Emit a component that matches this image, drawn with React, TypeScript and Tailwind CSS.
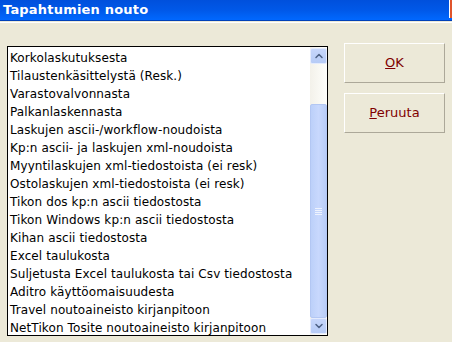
import { ChevronUp, ChevronDown } from "lucide-react";

const items = [
  "Korkolaskutuksesta",
  "Tilaustenkäsittelystä (Resk.)",
  "Varastovalvonnasta",
  "Palkanlaskennasta",
  "Laskujen ascii-/workflow-noudoista",
  "Kp:n ascii- ja laskujen xml-noudoista",
  "Myyntilaskujen xml-tiedostoista (ei resk)",
  "Ostolaskujen xml-tiedostoista (ei resk)",
  "Tikon dos kp:n ascii tiedostosta",
  "Tikon Windows kp:n ascii tiedostosta",
  "Kihan ascii tiedostosta",
  "Excel taulukosta",
  "Suljetusta Excel taulukosta tai Csv tiedostosta",
  "Aditro käyttöomaisuudesta",
  "Travel noutoaineisto kirjanpitoon",
  "NetTikon Tosite noutoaineisto kirjanpitoon",
];

function Scrollbar() {
  return (
    <div className="w-[17px] flex flex-col bg-gradient-to-r from-[#f3f1ea] to-[#fefefb]">
      <div className="h-[16px] mt-[1px] rounded-[2px] border border-[#e4ebfd] bg-gradient-to-b from-[#c6d6fb] to-[#b6cbf6] flex items-center justify-center">
        <ChevronUp className="h-3 w-3 text-[#4d6185]" strokeWidth={3} />
      </div>
      <div className="h-[40px]" />
      <div className="flex-1 rounded-[2px] border border-[#b3c7f3] bg-gradient-to-r from-[#bcd0f9] via-[#c8d8fd] to-[#b9cdf7] flex flex-col items-center justify-center gap-[1px]">
        <div className="w-[7px] h-[1px] bg-[#eef3fe]" />
        <div className="w-[7px] h-[1px] bg-[#eef3fe]" />
        <div className="w-[7px] h-[1px] bg-[#eef3fe]" />
        <div className="w-[7px] h-[1px] bg-[#eef3fe]" />
      </div>
      <div className="h-[16px] mb-[1px] rounded-[2px] border border-[#e4ebfd] bg-gradient-to-b from-[#c6d6fb] to-[#b6cbf6] flex items-center justify-center">
        <ChevronDown className="h-3 w-3 text-[#4d6185]" strokeWidth={3} />
      </div>
    </div>
  );
}

function XpButton({ hot, rest }: { hot: string; rest: string }) {
  return (
    <button className="w-[101px] h-[40px] border border-t-white border-l-white border-r-[#aca899] border-b-[#aca899] bg-[#ece9d8] text-[13px] text-[#800000] flex items-center justify-center">
      <span>
        <span className="underline">{hot}</span>
        {rest}
      </span>
    </button>
  );
}

export default function App() {
  return (
    <div className="w-[452px] h-[342px] bg-[#ece9d8] overflow-hidden flex flex-col" style={{ fontFamily: '"DejaVu Sans", sans-serif' }}>
      <div className="relative h-[21px] bg-gradient-to-b from-[#0050dc] via-[#0058e8] to-[#0068ff] border-b border-[#0040b8] flex items-center pl-[3px]">
        <span className="text-white font-bold text-[13px] tracking-[0.2px]">Tapahtumien nouto</span>
        <div className="absolute right-0 top-0 w-[3px] h-[18px] bg-[#e0542c] border-l border-white" />
      </div>
      <div className="h-[1px] bg-[#ece9d8]" />
      <div className="h-[1px] bg-white" />
      <div className="flex pl-[7px] pt-[23px] gap-[16px]">
        <div className="w-[321px] h-[290px] border border-black bg-white flex">
          <div className="flex-1 overflow-hidden pl-[2px] pt-[2px] text-[12px] tracking-[0.1px] text-black">
            {items.map((t) => (
              <div key={t} className="h-[18px] leading-[18px] whitespace-nowrap">
                {t}
              </div>
            ))}
          </div>
          <Scrollbar />
        </div>
        <div className="flex flex-col gap-[10px] -mt-[3px]">
          <XpButton hot="O" rest="K" />
          <XpButton hot="P" rest="eruuta" />
        </div>
      </div>
    </div>
  );
}
